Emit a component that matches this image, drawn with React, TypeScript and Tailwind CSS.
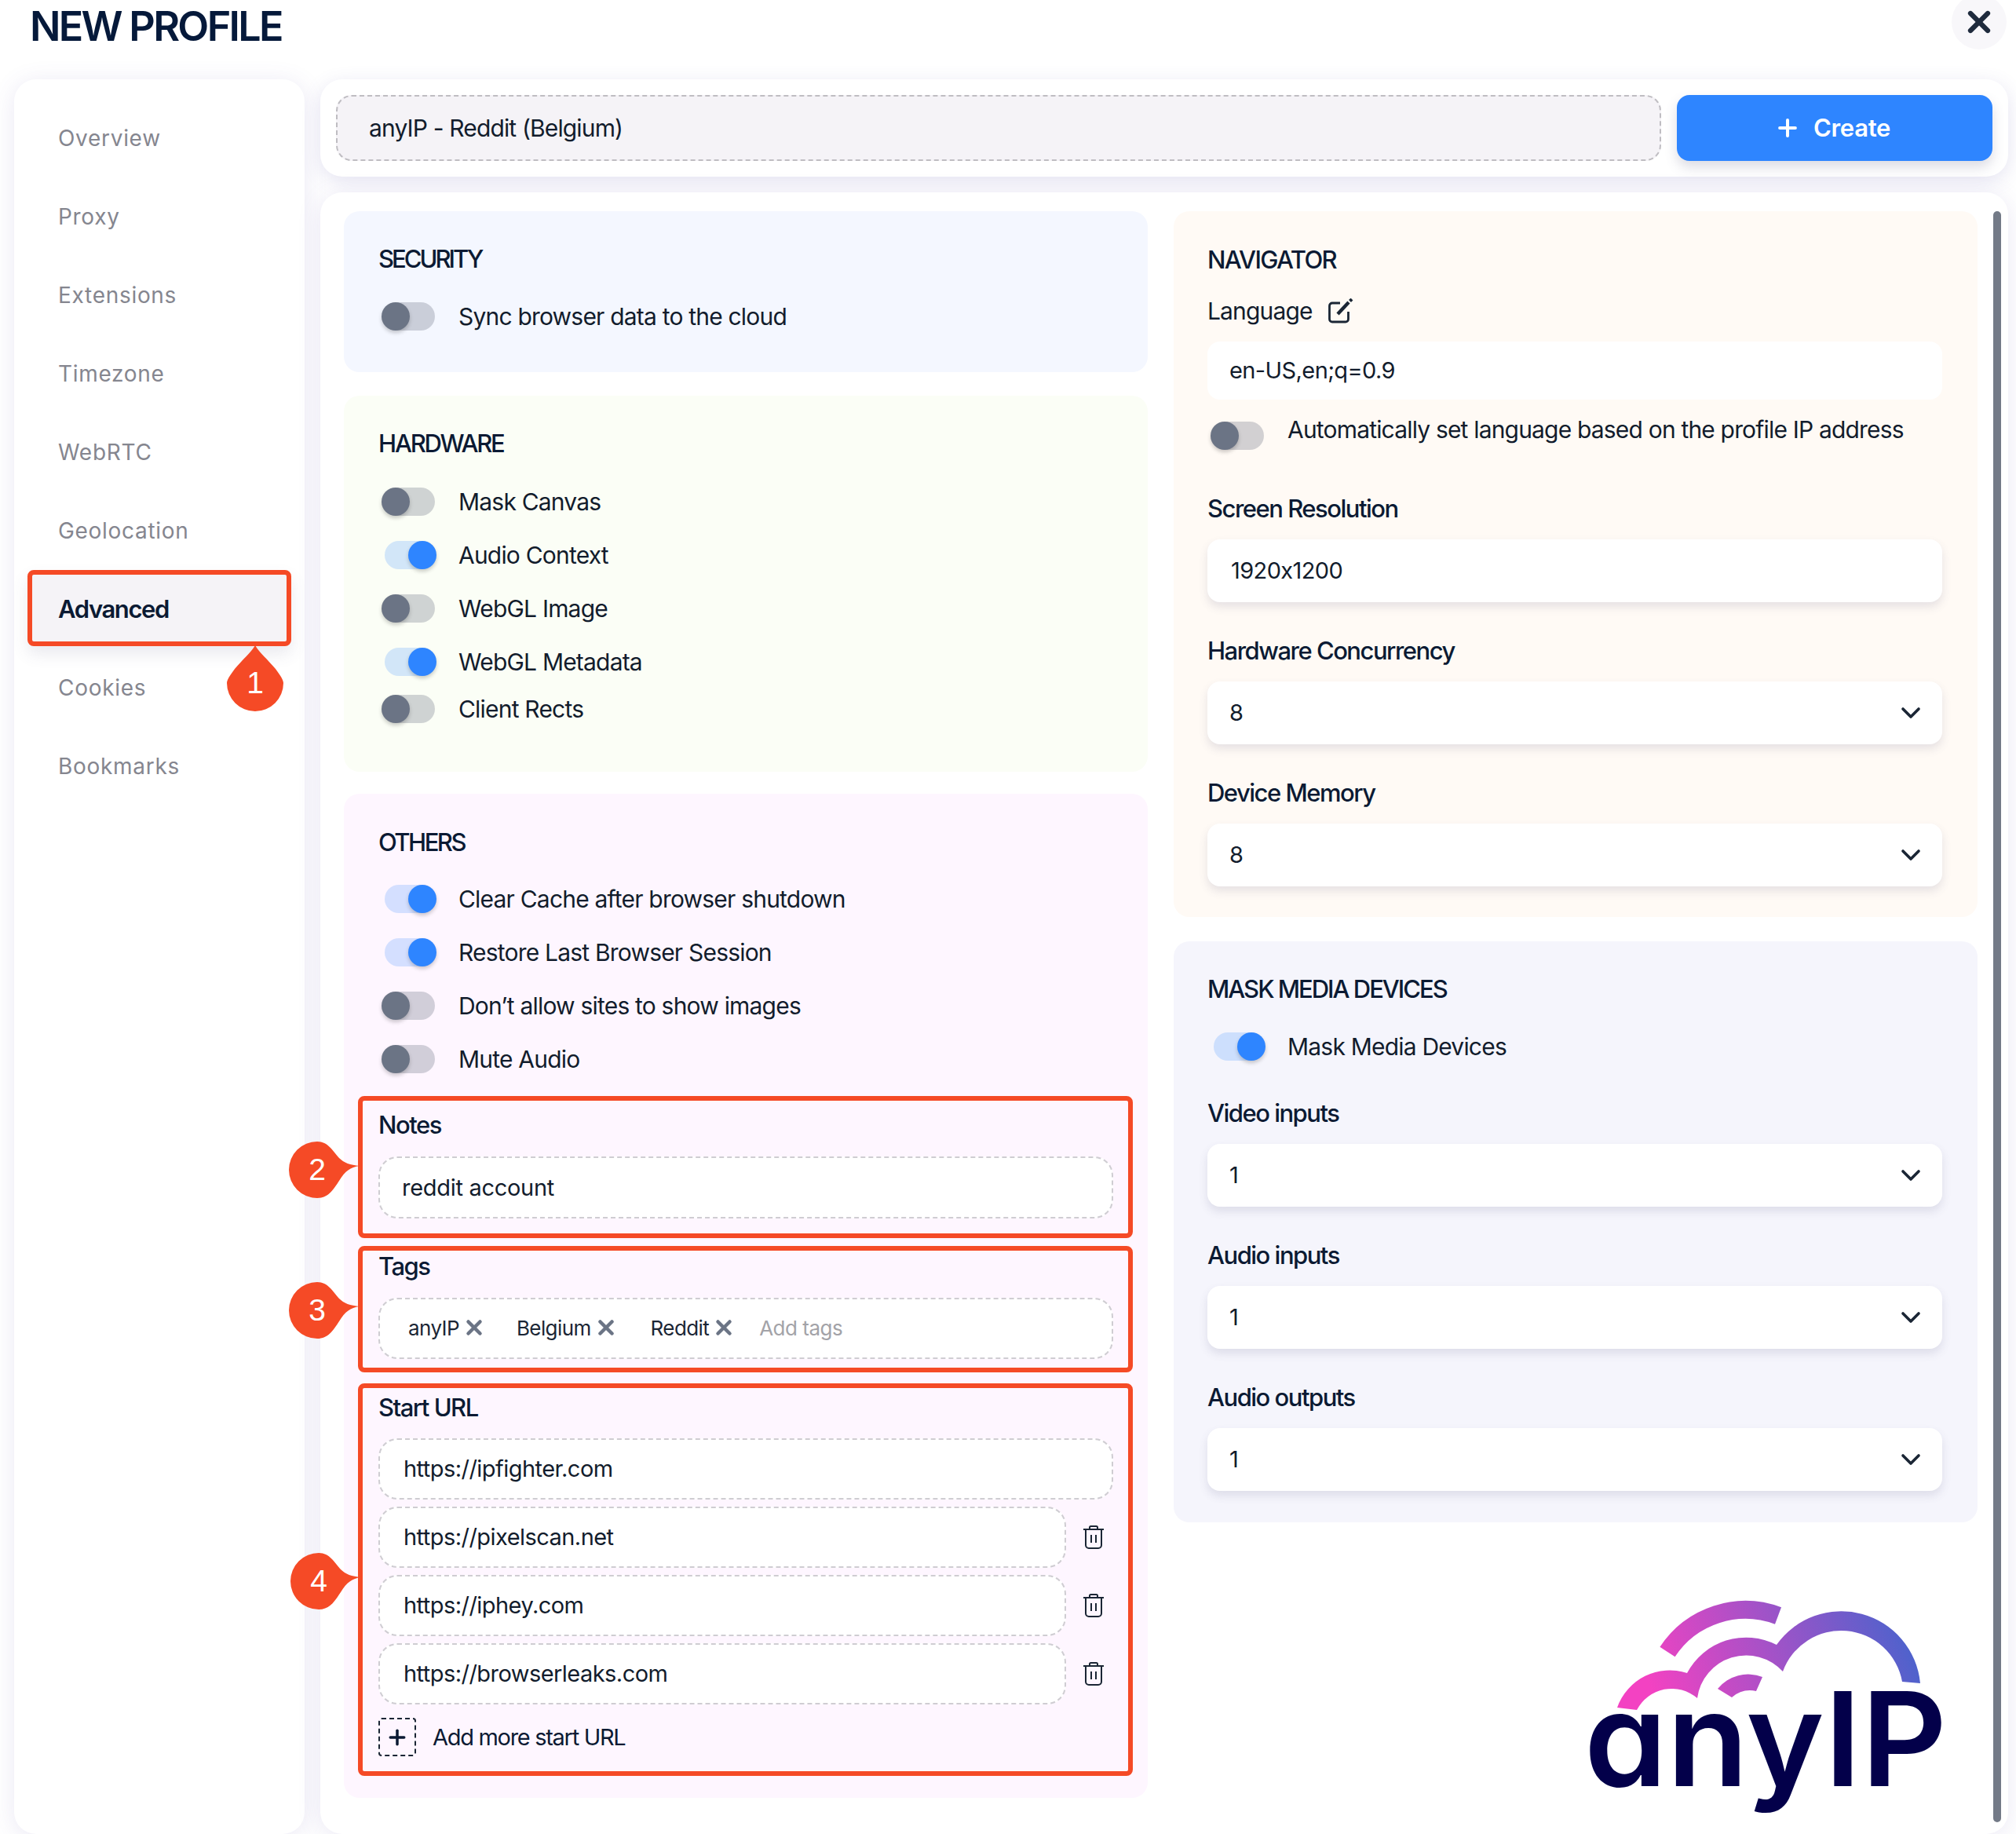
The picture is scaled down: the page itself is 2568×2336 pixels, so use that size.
import { ChevronDown, Plus, X } from "lucide-react";
import type { ReactNode } from "react";

const navItems = ["Overview", "Proxy", "Extensions", "Timezone", "WebRTC", "Geolocation", "Advanced", "Cookies", "Bookmarks"];

function Toggle({ on }: { on: boolean }) {
  return (
    <div className="relative h-[36px] w-[70px] shrink-0">
      <div className={`absolute left-[4px] top-0 h-[36px] w-[64px] rounded-full ${on ? "bg-[#2e85ff]/20" : "bg-[#6b7280]/30"}`} />
      <div
        className={`absolute top-0 h-[36px] w-[36px] rounded-full shadow-[0_3px_5px_rgba(0,0,0,0.2)] ${on ? "left-[34px] bg-[#2e85ff]" : "left-0 bg-[#6b7485]"}`}
      />
    </div>
  );
}

function ToggleRow({ label, on = false, h = "h-[68px]" }: { label: string; on?: boolean; h?: string }) {
  return (
    <div className={`ml-[48px] flex items-center gap-[28px] ${h}`}>
      <Toggle on={on} />
      <span className="text-[30px] tracking-[-0.8px] text-[#121c2c]">{label}</span>
    </div>
  );
}

function Heading({ children, tracking }: { children: ReactNode; tracking: string }) {
  return <div className={`h-[40px] text-[31px] font-medium leading-[40px] text-[#0b1a33] ${tracking}`}>{children}</div>;
}

function FieldLabel({ children }: { children: ReactNode }) {
  return <div className="h-[40px] text-[31px] font-medium leading-[40px] tracking-[-1.5px] text-[#0b1a33]">{children}</div>;
}

function DashedInput({ children, className = "" }: { children: ReactNode; className?: string }) {
  return (
    <div className={`flex items-center rounded-[24px] border-2 border-dashed border-[#cfcdd2] bg-white ${className}`}>
      {children}
    </div>
  );
}

function SelectField({ label, value, mt = "mt-[42px]" }: { label: string; value: string; mt?: string }) {
  return (
    <div className={mt}>
      <FieldLabel>{label}</FieldLabel>
      <div className="mt-[19px] flex h-[80px] items-center justify-between rounded-[16px] bg-white pl-[28px] pr-[20px] text-[29px] tracking-[-0.6px] text-[#121c2c] shadow-[0_6px_12px_rgba(80,80,120,0.14)]">
        <span>{value}</span>
        <ChevronDown size={40} strokeWidth={2.2} className="text-[#1b2635]" />
      </div>
    </div>
  );
}

function TrashIcon() {
  return (
    <svg width="26" height="30" viewBox="0 0 26 30" fill="none" stroke="#1b2635" strokeWidth="2" className="mx-[1px] shrink-0">
      <path d="M0 5h26M8 5V2.5A1.5 1.5 0 0 1 9.5 1h7A1.5 1.5 0 0 1 18 2.5V5" />
      <path d="M3 5v20a4 4 0 0 0 4 4h12a4 4 0 0 0 4-4V5" />
      <path d="M10 12v10M16 12v10" />
    </svg>
  );
}

function EditIcon() {
  return (
    <svg width="34" height="32" viewBox="0 0 34 32" fill="none" stroke="#1b2635" strokeWidth="2.8" className="shrink-0">
      <path d="M16 6H6a3.5 3.5 0 0 0-3.5 3.5v17A3.5 3.5 0 0 0 6 30h17a3.5 3.5 0 0 0 3.5-3.5V17" />
      <path d="M13 20L27 5" strokeWidth="4.4" />
      <path d="M28.5 3.5L31 1" strokeWidth="4" />
    </svg>
  );
}

function Tag({ label, gap }: { label: string; gap: string }) {
  return (
    <span className={`flex items-center gap-[4px] text-[26px] tracking-[-0.6px] text-[#1b2635] ${gap}`}>
      {label}
      <X size={30} strokeWidth={3.6} className="text-[#6b7485]" />
    </span>
  );
}

// teardrop callout, tip points up or to the right
function Badge({ n, up = false, className }: { n: string; up?: boolean; className: string }) {
  return (
    <svg viewBox={up ? "0 0 72 84" : "0 0 90 72"} className={`absolute ${up ? "h-[84px] w-[72px]" : "h-[72px] w-[90px]"} ${className}`}>
      <path
        fill="#f54a26"
        d={
          up
            ? "M36 0C42 10 52 18 62 30C68 38 72 44 72 48A36 36 0 0 1 0 48C0 44 4 38 10 30C20 18 30 10 36 0Z"
            : "M36 0C50 0 56 12 64 21C70 27 78 30 90 31C78 33 72 37 64 50C56 62 50 72 36 72A36 36 0 0 1 36 0Z"
        }
      />
      <text x="36" y={up ? "61" : "49"} textAnchor="middle" fill="#fff" fontSize="39" fontFamily="Liberation Sans, sans-serif">
        {n}
      </text>
    </svg>
  );
}

function Logo() {
  return (
    <svg viewBox="2000 2020 500 310" className="mr-[19px] mt-[83px] h-[310px] w-[500px] self-end">
      <defs>
        <linearGradient id="cloud" gradientUnits="userSpaceOnUse" x1="2110" y1="2170" x2="2420" y2="2060">
          <stop offset="0" stopColor="#f342c2" />
          <stop offset="0.55" stopColor="#9a54c8" />
          <stop offset="1" stopColor="#4f62cc" />
        </linearGradient>
      </defs>
      <path d="M2124 2102A119 119 0 0 1 2265 2056" fill="none" stroke="url(#cloud)" strokeWidth="23" />
      <path
        fill="url(#cloud)"
        d="M2060 2173A71 71 0 0 1 2149 2129A85 85 0 0 1 2263 2093A101 101 0 0 1 2446 2142L2423 2140A79 79 0 0 0 2271 2127A63 63 0 0 0 2162 2161A50 50 0 0 0 2085 2176Z"
      />
      <path fill="url(#cloud)" d="M2188 2149A50 50 0 0 1 2245 2134L2237 2152A36 36 0 0 0 2206 2160Z" />
      <text
        x="2018"
        y="2273"
        fill="#03004a"
        fontSize="166"
        fontWeight="600"
        fontFamily="Inter, sans-serif"
        textLength="462"
        lengthAdjust="spacingAndGlyphs"
        className="[font-feature-settings:'cv11']"
      >
        anyIP
      </text>
    </svg>
  );
}

export default function App() {
  return (
    <div className="h-[2336px] w-[2568px] overflow-hidden bg-white font-['Inter',sans-serif]">
      {/* header */}
      <div className="flex h-[101px] items-start justify-between pl-[38px] pr-[12px]">
        <h1 className="mt-[4px] text-[52px] font-semibold leading-[60px] tracking-[-2.7px] text-[#05193a]">NEW PROFILE</h1>
        <div className="-mt-[7px] flex h-[70px] w-[70px] items-center justify-center rounded-full bg-[#f8f7fa]">
          <X size={44} strokeWidth={3.4} className="text-[#1f2b3d]" />
        </div>
      </div>

      <div className="flex gap-[20px] pl-[18px] pr-[10px]">
        {/* sidebar */}
        <nav className="h-[2235px] w-[370px] rounded-[28px] bg-white pt-[25px] shadow-[0_4px_30px_rgba(90,80,170,0.13)]">
          {navItems.map((item) =>
            item === "Advanced" ? (
              <div
                key={item}
                className="mx-[17px] mb-[3px] flex h-[97px] items-center rounded-[8px] border-[6px] border-[#f54a26] bg-[#f5f3f7] pl-[33px] pt-[3px] text-[31px] font-semibold tracking-[-1.4px] text-[#0b1a33] shadow-[0_10px_20px_rgba(80,80,120,0.12)]"
              >
                {item}
              </div>
            ) : (
              <div key={item} className="mx-[17px] flex h-[100px] items-center pl-[39px] text-[28px] tracking-[0.7px] text-[#85868f]">
                {item}
              </div>
            ),
          )}
        </nav>

        <div className="flex w-[2150px] flex-col gap-[20px]">
          {/* name + create */}
          <div className="flex h-[124px] items-center gap-[20px] rounded-[28px] bg-white pl-[20px] pr-[20px] shadow-[0_6px_24px_rgba(90,80,170,0.16)]">
            <div className="flex h-[84px] flex-1 items-center rounded-[20px] border-2 border-dashed border-[#bfbdc2] bg-[#f5f3f7] pl-[40px] text-[30px] tracking-[-0.85px] text-[#121c2c]">
              anyIP - Reddit (Belgium)
            </div>
            <button className="flex h-[84px] w-[402px] items-center justify-center gap-[16px] rounded-[16px] bg-[#2e85ff] pr-[6px] text-[31px] font-semibold tracking-[-0.3px] text-white shadow-[0_8px_16px_rgba(80,80,120,0.2)]">
              <Plus size={34} strokeWidth={2.8} />
              Create
            </button>
          </div>

          {/* main panel */}
          <div className="flex h-[2091px] rounded-[28px] bg-white pl-[30px] pt-[24px] shadow-[0_4px_30px_rgba(90,80,170,0.13)]">
            <div className="flex w-[1024px] flex-col">
              <section className="h-[205px] rounded-[20px] bg-[#f4f7ff] pt-[41px]">
                <div className="ml-[44px]"><Heading tracking="tracking-[-3px]">SECURITY</Heading></div>
                <div className="mt-[19px]"><ToggleRow label="Sync browser data to the cloud" /></div>
              </section>

              <section className="mt-[30px] h-[479px] rounded-[20px] bg-[#fbfef6] pt-[41px]">
                <div className="ml-[44px]"><Heading tracking="tracking-[-2.2px]">HARDWARE</Heading></div>
                <div className="mt-[20px]">
                  <ToggleRow label="Mask Canvas" />
                  <ToggleRow label="Audio Context" on />
                  <ToggleRow label="WebGL Image" />
                  <ToggleRow label="WebGL Metadata" on />
                  <ToggleRow label="Client Rects" h="h-[52px]" />
                </div>
              </section>

              <section className="mt-[28px] h-[1279px] rounded-[20px] bg-[#fef6ff] pt-[42px]">
                <div className="ml-[44px]"><Heading tracking="tracking-[-2.5px]">OTHERS</Heading></div>
                <div className="mt-[18px]">
                  <ToggleRow label="Clear Cache after browser shutdown" on />
                  <ToggleRow label="Restore Last Browser Session" on />
                  <ToggleRow label="Don’t allow sites to show images" />
                  <ToggleRow label="Mute Audio" />
                </div>

                <div className="ml-[18px] mt-[13px] h-[181px] w-[987px] rounded-[8px] border-[6px] border-[#f54a26] pl-[20px] pr-[19px] pt-[11px]">
                  <FieldLabel>Notes</FieldLabel>
                  <DashedInput className="mt-[20px] h-[79px] pl-[28px] text-[29px] tracking-[-0.3px] text-[#121c2c]">reddit account</DashedInput>
                </div>

                <div className="ml-[18px] mt-[10px] h-[161px] w-[987px] rounded-[8px] border-[6px] border-[#f54a26] pl-[20px] pr-[19px]">
                  <FieldLabel>Tags</FieldLabel>
                  <DashedInput className="mt-[20px] h-[78px] pb-[2px] pl-[36px]">
                    <Tag label="anyIP" gap="mr-[39px]" />
                    <Tag label="Belgium" gap="mr-[42px]" />
                    <Tag label="Reddit" gap="mr-[30px]" />
                    <span className="text-[26px] tracking-[-0.5px] text-[#a3a3a8]">Add tags</span>
                  </DashedInput>
                </div>

                <div className="ml-[18px] mt-[14px] h-[500px] w-[987px] rounded-[8px] border-[6px] border-[#f54a26] pl-[20px] pr-[19px] pt-[5px]">
                  <FieldLabel>Start URL</FieldLabel>
                  <div className="mt-[19px] flex flex-col gap-[9px]">
                    <DashedInput className="h-[78px] pl-[30px] text-[29px] tracking-[-0.55px] text-[#121c2c]">https://ipfighter.com</DashedInput>
                    {["https://pixelscan.net", "https://iphey.com", "https://browserleaks.com"].map((url) => (
                      <div key={url} className="flex items-center gap-[21px]">
                        <DashedInput className="h-[78px] w-[876px] pl-[30px] text-[29px] tracking-[-0.55px] text-[#121c2c]">{url}</DashedInput>
                        <TrashIcon />
                      </div>
                    ))}
                  </div>
                  <div className="mt-[17px] flex items-center gap-[21px]">
                    <div className="flex h-[49px] w-[48px] items-center justify-center rounded-[4px] border-2 border-dashed border-[#1b2635]">
                      <Plus size={30} strokeWidth={2.8} className="text-[#0b1a33]" />
                    </div>
                    <span className="text-[29px] tracking-[-1.3px] text-[#0b1a33]">Add more start URL</span>
                  </div>
                </div>
              </section>
            </div>

            <div className="ml-[33px] flex w-[1024px] flex-col">
              <section className="h-[899px] rounded-[20px] bg-[#fffaf5] pl-[43px] pr-[45px] pt-[42px]">
                <Heading tracking="tracking-[-1.6px]">NAVIGATOR</Heading>
                <div className="mt-[25px] flex h-[40px] items-center gap-[19px] text-[30px] tracking-[-0.85px] text-[#121c2c]">
                  Language
                  <EditIcon />
                </div>
                <div className="mt-[19px] flex h-[74px] items-center rounded-[16px] bg-white pl-[28px] text-[29px] tracking-[-0.6px] text-[#121c2c]">en-US,en;q=0.9</div>
                <div className="mt-[20px] flex items-start gap-[28px] pl-[4px]">
                  <div className="mt-[8px]"><Toggle on={false} /></div>
                  <span className="-mt-[2px] text-[30px] leading-[40px] tracking-[-0.82px] text-[#121c2c]">Automatically set language based on the profile IP address</span>
                </div>
                <div className="mt-[55px]">
                  <FieldLabel>Screen Resolution</FieldLabel>
                  <div className="mt-[19px] flex h-[80px] items-center rounded-[16px] bg-white pl-[30px] text-[29px] tracking-[-0.6px] text-[#121c2c] shadow-[0_6px_12px_rgba(80,80,120,0.14)]">1920x1200</div>
                </div>
                <SelectField label="Hardware Concurrency" value="8" />
                <SelectField label="Device Memory" value="8" />
              </section>

              <section className="mt-[31px] h-[740px] rounded-[20px] bg-[#f5f5fc] pl-[43px] pr-[45px] pt-[41px]">
                <Heading tracking="tracking-[-2px]">MASK MEDIA DEVICES</Heading>
                <div className="-ml-[44px] mt-[19px]"><ToggleRow label="Mask Media Devices" on /></div>
                <SelectField label="Video inputs" value="1" mt="mt-[31px]" />
                <SelectField label="Audio inputs" value="1" />
                <SelectField label="Audio outputs" value="1" />
              </section>

              <Logo />
            </div>

            <div className="ml-[20px] h-[2052px] w-[10px] rounded-full bg-[#737a87]" />
          </div>
        </div>
      </div>

      <Badge n="1" up className="left-[289px] top-[822px]" />
      <Badge n="2" className="left-[368px] top-[1454px]" />
      <Badge n="3" className="left-[368px] top-[1633px]" />
      <Badge n="4" className="left-[370px] top-[1978px]" />
    </div>
  );
}
